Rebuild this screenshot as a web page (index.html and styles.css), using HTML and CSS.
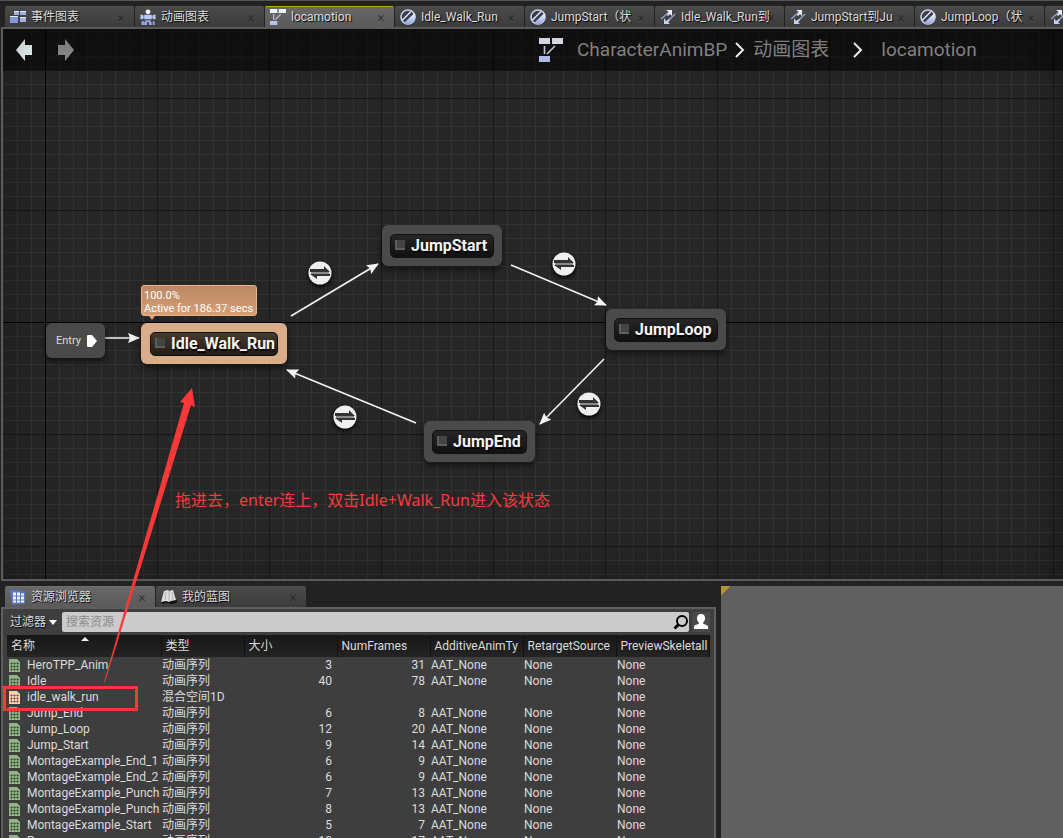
FILE: index.html
```html
<!DOCTYPE html>
<html lang="zh-CN">
  <head>
    <meta charset="UTF-8" />
    <meta name="viewport" content="width=device-width, initial-scale=1" />
    <title>CharacterAnimBP</title>
    <link rel="stylesheet" href="styles.css" />
  </head>
  <body>
    <!-- shared icons -->
    <svg class="defs" width="0" height="0">
      <defs>
        <linearGradient id="blue" x1="0" y1="0" x2="0" y2="1">
          <stop offset="0" stop-color="#f4f7ff" />
          <stop offset="1" stop-color="#8ea5e6" />
        </linearGradient>
        <symbol id="i-event" viewBox="0 0 16 14">
          <path fill="#9fb0e0" d="M4 1h5v4H4zM10 1h6v4h-6zM10 7h6v5h-6z" />
          <path fill="#7f97dc" d="M0 6h8v7H0z" />
          <path fill="#e3e9fb" d="M4 1h5v1H4zM10 1h6v1h-6zM10 7h6v1h-6zM0 6h8v1H0z" />
        </symbol>
        <symbol id="i-anim" viewBox="0 0 16 17">
          <circle cx="8" cy="3" r="2.6" fill="#eef2ff" />
          <path fill="#b9c8f3" d="M0 6h3v5H0zM4 6h8v5H4zM13 6h3v5h-3zM3 8h10v1H3z" />
          <path fill="#8ea5e6" d="M1 13h3v4H1zM5 12h6v2H5zM4 14h3v3H4zM9 14h3v3H9zM13 13h2v4h-2z" />
        </symbol>
        <symbol id="i-state" viewBox="0 0 24 24">
          <path fill="#eef2fd" d="M0 0h11v6H0zM13 0h11v6H13z" />
          <path fill="#b3c3f1" d="M0 18h11v6H0z" />
          <path stroke="#c8d2ee" stroke-width="1.6" d="M5.500 8v8M16 8l-8 8" />
        </symbol>
        <symbol id="i-node" viewBox="0 0 16 16">
          <circle cx="8" cy="8" r="7" fill="#3a3d46" stroke="#c9d2ec" stroke-width="1.6" />
          <path fill="url(#blue)" d="M14.500 4A8 8 0 0 1 3.500 14.500z" />
          <path stroke="#dbe3fa" stroke-width="1.6" d="M2.500 11L11 2.500" />
        </symbol>
        <symbol id="i-trans" viewBox="0 0 16 16">
          <path stroke="#8f9fcc" stroke-width="1.600" d="M1 10l8-7M15 5l-8 8" />
          <path fill="#eef2fd" d="M6 1h6v6l-2-2-2 2-1-1 2-3z" />
          <path fill="#c3d0f8" d="M4 9v6h6l-2-2 2-2-1-1-3 2z" />
        </symbol>
        <symbol id="i-asset" viewBox="0 0 16 15">
          <path fill="#5b78c4" d="M0 0l15 2v12l-13 1z" />
          <path fill="#f1f5ff" d="M3 3h3v3H3zM7 3h3v3H7zM11 4h3v2h-3zM3 7h3v3H3zM7 7h3v3H7zM11 7h3v3h-3zM3 11h3v2H3zM7 11h3v2H7zM11 11h3v2h-3z" />
        </symbol>
        <symbol id="i-book" viewBox="0 0 16 14">
          <path fill="#111" d="M0 10l16 0v3l-6 1-4-1-5 1z" />
          <path fill="#dedede" d="M3 1l4-1 1 1 4-1 3 10-5 1-2 1-3-1-5 1z" />
          <path stroke="#999" stroke-width=".6" d="M8 1v10M5 2l-1 8M11 2l1 8" />
        </symbol>
        <symbol id="i-file" viewBox="0 0 11 13">
          <path d="M0 0h8l3 3v10H0z" fill="currentColor" />
          <path stroke="#000" stroke-opacity=".35" d="M1 4.500h9M1 7.500h9M1 10.500h9M2.500 3v9M5.500 3v9M8.500 3v9" />
        </symbol>
        <symbol id="i-rule" viewBox="0 0 24 24">
          <circle cx="12" cy="12" r="11.500" fill="#efefef" />
          <path fill="#333" d="M2 8h14V5l6 6H2zM22 15H9v3l-7-5h20z" />
          <path fill="#8a8a8a" d="M3 11h18v2H3z" />
        </symbol>
        <marker id="tip" viewBox="0 0 12 10" refX="11" refY="5" markerWidth="12" markerHeight="10" markerUnits="userSpaceOnUse" orient="auto">
          <path d="M0 0l12 5-12 5 2-5z" fill="#f4f4f4" />
        </marker>
      </defs>
    </svg>

    <div class="tabs">
      <div class="tab"><button class="tab-label"><svg width="16" height="16"><use href="#i-event" /></svg>事件图表</button><button class="close">×</button></div>
      <div class="tab"><button class="tab-label"><svg width="16" height="16"><use href="#i-anim" /></svg>动画图表</button><button class="close">×</button></div>
      <div class="tab active"><button class="tab-label"><svg width="16" height="16"><use href="#i-state" /></svg>locamotion</button><button class="close">×</button></div>
      <div class="tab"><button class="tab-label"><svg width="16" height="16"><use href="#i-node" /></svg>Idle_Walk_Run</button><button class="close">×</button></div>
      <div class="tab"><button class="tab-label"><svg width="16" height="16"><use href="#i-node" /></svg>JumpStart（状</button><button class="close">×</button></div>
      <div class="tab"><button class="tab-label"><svg width="16" height="16"><use href="#i-trans" /></svg>Idle_Walk_Run到</button><button class="close">×</button></div>
      <div class="tab"><button class="tab-label"><svg width="16" height="16"><use href="#i-trans" /></svg>JumpStart到Ju</button><button class="close">×</button></div>
      <div class="tab"><button class="tab-label"><svg width="16" height="16"><use href="#i-node" /></svg>JumpLoop（状</button><button class="close">×</button></div>
      <div class="tab"><button class="tab-label"><svg width="16" height="16"><use href="#i-trans" /></svg></button></div>
    </div>

    <main class="graph">
      <header class="graph-bar">
        <div class="history">
          <button aria-label="Back">
            <svg width="18" height="24" viewBox="0 0 18 24"><path fill="#eefcfc" d="M1 12L10 1v6h7v10h-7v6z" /></svg>
          </button>
          <button aria-label="Forward" disabled>
            <svg width="18" height="24" viewBox="0 0 18 24"><path fill="#8c8c8c" d="M17 12L8 1v6H1v10h7v6z" /></svg>
          </button>
        </div>
        <nav class="crumbs">
          <svg width="24" height="24"><use href="#i-state" /></svg>
          <a href="#">CharacterAnimBP</a>
          <svg class="chevron" width="10" height="16" viewBox="0 0 10 16"><path d="M1 1l7 7-7 7" /></svg>
          <a href="#">动画图表</a>
          <svg class="chevron wide" width="10" height="16" viewBox="0 0 10 16"><path d="M1 1l7 7-7 7" /></svg>
          <a href="#">locamotion</a>
        </nav>
      </header>

      <svg class="wires" width="1060" height="550" viewBox="3 29 1060 550">
        <g stroke="#f4f4f4" stroke-width="1.600">
          <path d="M105 338H139" marker-end="url(#tip)" />
          <path d="M291 316L378 264" marker-end="url(#tip)" />
          <path d="M511 265L606 305" marker-end="url(#tip)" />
          <path d="M604 359L540 424" marker-end="url(#tip)" />
          <path d="M416 423L287 370" marker-end="url(#tip)" />
        </g>
      </svg>

      <!-- state machine nodes -->
      <div class="node entry">Entry
        <svg width="10" height="12" viewBox="0 0 10 12"><path fill="#fff" d="M1 0h4l5 6-5 6H1q-1 0-1-1V1q0-1 1-1z" /></svg>
      </div>
      <div class="bubble">100.0%<br />Active for 186.37 secs</div>
      <div class="node current idle"><div class="title"><i></i>Idle_Walk_Run</div></div>
      <div class="node start"><div class="title"><i></i>JumpStart</div></div>
      <div class="node loop"><div class="title"><i></i>JumpLoop</div></div>
      <div class="node end"><div class="title"><i></i>JumpEnd</div></div>

      <svg class="rule r1" width="24" height="24"><use href="#i-rule" /></svg>
      <svg class="rule r2" width="24" height="24"><use href="#i-rule" /></svg>
      <svg class="rule r3" width="24" height="24"><use href="#i-rule" /></svg>
      <svg class="rule r4" width="24" height="24"><use href="#i-rule" /></svg>

      <p class="note">拖进去，enter连上，双击Idle+Walk_Run进入该状态</p>
    </main>

    <div class="bottom">
      <section class="browser">
        <div class="tabs lower">
          <div class="tab active"><button class="tab-label"><svg width="16" height="16"><use href="#i-asset" /></svg>资源浏览器</button><button class="close">×</button></div>
          <div class="tab"><button class="tab-label"><svg width="16" height="16"><use href="#i-book" /></svg>我的蓝图</button><button class="close">×</button></div>
        </div>
        <div class="panel">
          <div class="filter">
            <button class="filter-button">过滤器
              <svg width="8" height="5" viewBox="0 0 8 5"><path fill="#fff" d="M0 0h8L4 5z" /></svg>
            </button>
            <label class="search">
              <input type="text" placeholder="搜索资源" aria-label="搜索资源" />
              <svg width="16" height="16" viewBox="0 0 16 16"><circle cx="9" cy="7" r="5" fill="none" stroke="#000" stroke-width="2" /><path stroke="#000" stroke-width="3" d="M5.500 10.500L1.500 14.500" /></svg>
            </label>
            <button class="user" aria-label="User">
              <svg width="14" height="15" viewBox="0 0 14 15"><path fill="#fff" d="M7 0c3 0 4 2 4 4 0 3-1 3-2 5 0 2 5 1 5 4v2H0v-2c0-3 5-2 5-4-1-2-2-2-2-5 0-2 1-4 4-4z" /></svg>
            </button>
          </div>
          <table class="assets">
            <colgroup>
              <col class="c-name" /><col class="c-type" /><col class="c-num" /><col class="c-num" /><col class="c-num" /><col class="c-num" /><col />
            </colgroup>
            <thead>
              <tr><th class="sorted">名称</th><th>类型</th><th>大小</th><th>NumFrames</th><th>AdditiveAnimTy</th><th>RetargetSource</th><th>PreviewSkeletall</th></tr>
            </thead>
            <tbody>
              <tr><td><svg width="11" height="13"><use href="#i-file" /></svg>HeroTPP_Anim</td><td>动画序列</td><td>3</td><td>31</td><td>AAT_None</td><td>None</td><td>None</td></tr>
              <tr><td><svg width="11" height="13"><use href="#i-file" /></svg>Idle</td><td>动画序列</td><td>40</td><td>78</td><td>AAT_None</td><td>None</td><td>None</td></tr>
              <tr class="blend"><td><svg width="11" height="13"><use href="#i-file" /></svg>idle_walk_run</td><td>混合空间1D</td><td></td><td></td><td></td><td></td><td>None</td></tr>
              <tr><td><svg width="11" height="13"><use href="#i-file" /></svg>Jump_End</td><td>动画序列</td><td>6</td><td>8</td><td>AAT_None</td><td>None</td><td>None</td></tr>
              <tr><td><svg width="11" height="13"><use href="#i-file" /></svg>Jump_Loop</td><td>动画序列</td><td>12</td><td>20</td><td>AAT_None</td><td>None</td><td>None</td></tr>
              <tr><td><svg width="11" height="13"><use href="#i-file" /></svg>Jump_Start</td><td>动画序列</td><td>9</td><td>14</td><td>AAT_None</td><td>None</td><td>None</td></tr>
              <tr><td><svg width="11" height="13"><use href="#i-file" /></svg>MontageExample_End_1</td><td>动画序列</td><td>6</td><td>9</td><td>AAT_None</td><td>None</td><td>None</td></tr>
              <tr><td><svg width="11" height="13"><use href="#i-file" /></svg>MontageExample_End_2</td><td>动画序列</td><td>6</td><td>9</td><td>AAT_None</td><td>None</td><td>None</td></tr>
              <tr><td><svg width="11" height="13"><use href="#i-file" /></svg>MontageExample_Punch</td><td>动画序列</td><td>7</td><td>13</td><td>AAT_None</td><td>None</td><td>None</td></tr>
              <tr><td><svg width="11" height="13"><use href="#i-file" /></svg>MontageExample_Punch</td><td>动画序列</td><td>8</td><td>13</td><td>AAT_None</td><td>None</td><td>None</td></tr>
              <tr><td><svg width="11" height="13"><use href="#i-file" /></svg>MontageExample_Start</td><td>动画序列</td><td>5</td><td>7</td><td>AAT_None</td><td>None</td><td>None</td></tr>
              <tr><td><svg width="11" height="13"><use href="#i-file" /></svg>Run</td><td>动画序列</td><td>10</td><td>17</td><td>AAT_None</td><td>None</td><td>None</td></tr>
            </tbody>
          </table>
        </div>
      </section>
      <aside class="preview"></aside>
    </div>

    <!-- red marks drawn over both panels -->
    <svg class="marks" width="200" height="720">
      <path fill="#fd3838" d="M192 388L195 407L191 405L105 682L104 682L184 403L180 402z" />
      <rect x="4.500" y="687.500" width="132" height="22" fill="none" stroke="#fd3838" stroke-width="3" />
    </svg>
  </body>
</html>
```
FILE: styles.css
```css
* {
  box-sizing: border-box;
}

body {
  margin: 0;
  height: 100vh;
  overflow: hidden;
  position: relative;
  display: flex;
  flex-direction: column;
  background: #222;
  border-top: 1px solid #555;
  color: #dcdcdc;
  font-family: Roboto, "Noto Sans CJK SC", sans-serif;
  font-size: 12px;
}

button {
  margin: 0;
  padding: 0;
  border: 0;
  background: none;
  color: inherit;
  font: inherit;
}

svg {
  display: block;
  flex: none;
}

.defs {
  position: absolute;
}

/* tabs */
.tabs {
  display: flex;
  gap: 1px;
  padding: 5px 0 0 5px;
  overflow: hidden;
  flex: none;
}

.tab {
  display: flex;
  flex: 0 0 129px;
  min-width: 0;
  height: 21px;
  padding: 0 9px 0 5px;
  align-items: center;
  background: linear-gradient(#4a4a4a, #3c3c3c);
  border-top: 1px solid #505050;
  border-radius: 2px 2px 0 0;
}

.tab.active {
  background: linear-gradient(#686868, #5a5a5a);
  border-top-color: #c5a90e;
}

.tab-label {
  display: flex;
  flex: 1;
  gap: 5px;
  align-items: center;
  min-width: 0;
  white-space: nowrap;
  line-height: 18px;
  text-shadow: 1px 1px 1px #000;
}

.close {
  width: 8px;
  color: #242424;
  font-size: 14px;
  font-weight: 300;
  line-height: 18px;
}

.lower .tab {
  flex-basis: 150px;
}

.lower .tab.active {
  border-top-color: #707070;
}

/* graph */
.graph {
  position: relative;
  flex: 1;
  min-height: 0;
  margin-left: 1px;
  overflow: hidden;
  border: 2px solid #5a5a5a;
  border-right: 0;
  background:
    linear-gradient(#000, #000) 42px 0 / 1px 100% no-repeat,
    linear-gradient(#000, #000) 0 293px / 100% 1px no-repeat,
    linear-gradient(90deg, #161616 1px, transparent 1px) 42px 0 / 112px 112px,
    linear-gradient(#161616 1px, transparent 1px) 0 69px / 112px 112px,
    linear-gradient(90deg, #323232 1px, transparent 1px) 0 0 / 14px 14px,
    linear-gradient(#323232 1px, transparent 1px) 0 13px / 14px 14px,
    #262626;
}

.graph::after {
  content: "";
  position: absolute;
  inset: 0;
  box-shadow: inset 0 0 50px rgba(0, 0, 0, 0.35);
  pointer-events: none;
}

.graph-bar {
  display: flex;
  align-items: center;
  height: 42px;
  padding: 0 12px;
  background: rgba(0, 0, 0, 0.55);
}

.history {
  display: flex;
  gap: 24px;
  width: 524px;
}

.crumbs {
  display: flex;
  align-items: center;
  gap: 8px;
  font-size: 19px;
}

.crumbs a {
  color: #8a8a8a;
  text-decoration: none;
  line-height: 24px;
}

.crumbs a:first-of-type {
  margin-left: 6px;
}

.chevron {
  fill: none;
  stroke: #fff;
  stroke-width: 2;
}

.chevron.wide {
  margin: 0 10px 0 16px;
}

.wires {
  position: absolute;
  top: 0;
  left: 0;
}

.node {
  position: absolute;
  height: 41px;
  padding: 9px 8px;
  border-radius: 6px;
  background: #4a4a4a;
  box-shadow: 0 3px 6px rgba(0, 0, 0, 0.6);
}

.title {
  display: flex;
  align-items: center;
  gap: 6px;
  height: 24px;
  padding: 0 4px 2px;
  border-radius: 5px;
  background: linear-gradient(#262626, #111);
  border: 1px solid #111;
  color: #f4f4f4;
  font-size: 16px;
  font-weight: 700;
  text-shadow: 1px 2px 1px #000;
}

.title i {
  flex: none;
  width: 10px;
  height: 10px;
  background: #444;
  border: solid #5e5e5e;
  border-width: 0 0 2px 2px;
}

.current {
  padding: 9px;
  background: #d9ad87;
}

.current .title {
  background: linear-gradient(#443a30, #241d16);
}

.entry {
  left: 43px;
  top: 294px;
  display: flex;
  align-items: center;
  gap: 6px;
  width: 59px;
  height: 35px;
  padding: 0 10px;
  font-size: 11px;
}

.idle {
  left: 138px;
  top: 294px;
  width: 146px;
}

.start {
  left: 379px;
  top: 196px;
  width: 120px;
}

.loop {
  left: 603px;
  top: 280px;
  width: 120px;
}

.end {
  left: 421px;
  top: 392px;
  width: 111px;
}

.bubble {
  position: absolute;
  left: 138px;
  top: 256px;
  width: 116px;
  height: 31px;
  padding: 3px 2px;
  border: 1px solid #f0b184;
  border-radius: 3px;
  background: linear-gradient(#b98864, #d79e74);
  color: #fff;
  font-size: 11px;
  line-height: 13px;
  white-space: nowrap;
}

.bubble::after {
  content: "";
  position: absolute;
  left: 7px;
  top: 30px;
  border: 3px solid transparent;
  border-top: 4px solid #d79e74;
}

.rule {
  position: absolute;
  filter: drop-shadow(0 2px 2px #000);
}

.r1 {
  left: 305px;
  top: 232px;
}

.r2 {
  left: 549px;
  top: 223px;
}

.r3 {
  left: 574px;
  top: 363px;
}

.r4 {
  left: 330px;
  top: 376px;
}

.note {
  position: absolute;
  left: 172px;
  top: 460px;
  margin: 0;
  color: #f53b3b;
  font: 16px/22px "Noto Sans", "Noto Sans CJK SC", sans-serif;
  white-space: nowrap;
}

/* lower area */
.bottom {
  display: flex;
  gap: 5px;
  flex: 0 0 257px;
  min-height: 0;
  overflow: hidden;
  padding-left: 1px;
}

.browser {
  display: flex;
  flex-direction: column;
  flex: 715 1 0;
  min-width: 0;
}

.browser .tabs {
  padding-left: 4px;
}

.panel {
  flex: 1;
  min-height: 0;
  overflow: hidden;
  padding: 3px 4px 0;
  border: 2px solid #5e5e5e;
  border-bottom: 0;
  background: #3e3e3e;
}

.filter {
  display: flex;
  align-items: center;
  gap: 3px;
  height: 20px;
  margin-bottom: 3px;
}

.filter-button {
  display: flex;
  align-items: center;
  gap: 3px;
  width: 52px;
  padding-left: 3px;
  white-space: nowrap;
  line-height: 20px;
  text-shadow: 1px 1px 1px #000;
}

.search {
  display: flex;
  flex: 1;
  align-items: center;
  height: 20px;
  background: #cbcbcb;
  border-radius: 2px;
}

.search input {
  flex: 1;
  min-width: 0;
  padding: 0 4px;
  border: 0;
  background: none;
  font: inherit;
  outline: none;
}

.search input::placeholder {
  color: #8c8c8c;
}

.user {
  padding: 2px 2px 3px;
  background: #4a4a4a;
}

.assets {
  width: 100%;
  table-layout: fixed;
  border-collapse: collapse;
  line-height: 16px;
}

.c-name {
  width: 154px;
}

.c-type {
  width: 83px;
}

.c-num {
  width: 93px;
}

.assets th,
.assets td {
  overflow: hidden;
  white-space: nowrap;
  text-align: left;
  font-weight: 400;
}

.assets th {
  height: 22px;
  padding: 0 3px 0 4px;
  background: linear-gradient(#171717, #242424);
  border-right: 1px solid #111;
}

.assets td {
  height: 16px;
  padding: 0 5px 0 1px;
}

.assets td:nth-child(3),
.assets td:nth-child(4) {
  text-align: right;
}

.assets td svg {
  display: inline-block;
  margin: 0 7px 0 1px;
  vertical-align: -3px;
  color: #8fb389;
}

.assets .blend svg {
  color: #ffd0ad;
}

.sorted {
  position: relative;
}

.sorted::after {
  content: "";
  position: absolute;
  left: 74px;
  top: 2px;
  border: 4px solid transparent;
  border-top: 0;
  border-bottom-color: #eee;
}

.preview {
  flex: 342 1 0;
  margin-top: 5px;
  background: linear-gradient(135deg, #b5942b 7px, #606060 7px);
}

.marks {
  position: absolute;
  left: 0;
  top: -1px;
  pointer-events: none;
}
```
